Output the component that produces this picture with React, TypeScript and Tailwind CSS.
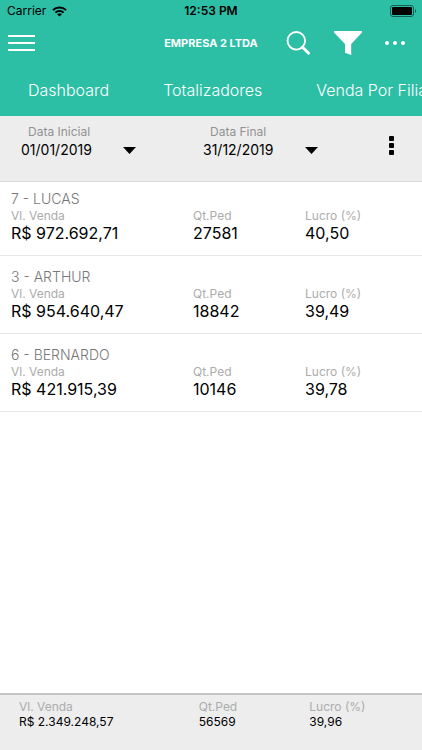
import React from "react";

const tabs = ["Dashboard", "Totalizadores", "Venda Por Filial"];

const vendedores = [
  { nome: "7 - LUCAS", venda: "R$ 972.692,71", pedidos: "27581", lucro: "40,50" },
  { nome: "3 - ARTHUR", venda: "R$ 954.640,47", pedidos: "18842", lucro: "39,49" },
  { nome: "6 - BERNARDO", venda: "R$ 421.915,39", pedidos: "10146", lucro: "39,78" },
];

function StatusBar() {
  return (
    <div className="grid h-[22px] grid-cols-3 items-center text-black">
      <div className="flex items-center gap-[6px] pl-[7px] text-xs">
        Carrier
        <svg width="15" height="11" viewBox="0 0 15 11" fill="none" stroke="currentColor">
          <path d="M0.9 4.1C4.6 0.5 10.4 0.5 14.1 4.1" strokeWidth="2" />
          <path d="M3.4 6.6C5.8 4.4 9.2 4.4 11.6 6.6" strokeWidth="1.9" />
          <path d="M7.5 10.6L5.1 8.2C6.5 7 8.5 7 9.9 8.2Z" fill="currentColor" stroke="none" />
        </svg>
      </div>
      <p className="text-center text-xs font-semibold">12:53 PM</p>
      <div className="flex justify-end pr-[5px]">
        <svg width="27" height="12" viewBox="0 0 27 12">
          <rect x="0.5" y="0.5" width="23" height="11" rx="2.5" fill="none" stroke="#125f53" />
          <rect x="2" y="2" width="20" height="8" rx="1" fill="black" />
          <path d="M25 4C26.5 4.5 26.5 7.5 25 8Z" fill="#125f53" />
        </svg>
      </div>
    </div>
  );
}

function Toolbar() {
  return (
    <div className="grid h-[42px] grid-cols-3 items-center">
      <div className="flex pl-2">
        <button aria-label="Menu">
          <svg width="27" height="16" viewBox="0 0 27 16" fill="currentColor">
            <path d="M0 0h27v2H0zM0 7h27v2H0zM0 14h27v2H0z" />
          </svg>
        </button>
      </div>
      <h1 className="text-center text-[11px] font-bold whitespace-nowrap">EMPRESA 2 LTDA</h1>
      <div className="flex items-center justify-between pr-[17px] pl-[5px]">
        <button aria-label="Pesquisar">
          <svg width="24" height="24" viewBox="0 0 24 24" fill="none" stroke="currentColor">
            <circle cx="10.3" cy="9.8" r="8.8" strokeWidth="1.9" />
            <path d="M16.6 16.2L22.6 22.2" strokeWidth="2.8" strokeLinecap="round" />
          </svg>
        </button>
        <button aria-label="Filtrar">
          <svg width="28" height="24" viewBox="0 0 28 24" fill="currentColor">
            <path d="M0 0H28V1.6L17.2 13V24L11 21.8V13L0 1.6Z" />
          </svg>
        </button>
        <button aria-label="Mais opções">
          <svg width="20" height="4" viewBox="0 0 20 4" fill="currentColor">
            <circle cx="2" cy="2" r="2" />
            <circle cx="10" cy="2" r="2" />
            <circle cx="18" cy="2" r="2" />
          </svg>
        </button>
      </div>
    </div>
  );
}

function DateField({ id, label, value }: { id: string; label: string; value: string }) {
  return (
    <div className="w-[115px]">
      <label htmlFor={id} className="block pl-[7px] text-xs leading-4 text-[#929292]">
        {label}
      </label>
      <div className="relative">
        <select id={id} className="block h-5 w-full appearance-none bg-transparent text-sm text-black">
          <option>{value}</option>
        </select>
        <svg className="pointer-events-none absolute top-[7px] right-0" width="13" height="7" viewBox="0 0 13 7">
          <path d="M0 0H13L6.5 7Z" />
        </svg>
      </div>
    </div>
  );
}

function Campo({ label, children, small }: { label: string; children: string; small?: boolean }) {
  return (
    <div>
      <dt className="text-xs leading-4 text-[#acacac]">{label}</dt>
      <dd className={small ? "text-xs leading-[14px] text-black" : "text-base leading-[18px] text-black"}>
        {children}
      </dd>
    </div>
  );
}

export default function App() {
  return (
    <div className="flex min-h-screen flex-col bg-white font-['Inter',sans-serif]">
      <header className="bg-[#2dbea6] text-white">
        <StatusBar />
        <Toolbar />
        <nav className="flex h-[52px] items-center gap-[54px] overflow-hidden pl-7">
          {tabs.map((tab) => (
            <a key={tab} href="#" className="text-base font-light whitespace-nowrap">
              {tab}
            </a>
          ))}
        </nav>
      </header>

      <section className="flex h-[66px] items-start border-b border-[#dcdcdc] bg-[#ededed] pt-2 pr-7 pl-[21px]">
        <DateField id="inicial" label="Data Inicial" value="01/01/2019" />
        <div className="w-[67px]" />
        <DateField id="final" label="Data Final" value="31/12/2019" />
        <button aria-label="Opções" className="mt-3 ml-auto">
          <svg width="5" height="19" viewBox="0 0 5 19">
            <rect width="5" height="5" rx="1" />
            <rect y="7" width="5" height="5" rx="1" />
            <rect y="14" width="5" height="5" rx="1" />
          </svg>
        </button>
      </section>

      <main className="grow">
        <ul>
          {vendedores.map((v) => (
            <li key={v.nome} className="border-b border-[#e6e6e6] px-[11px] pt-3 pb-[13px] first:pt-2">
              <h2 className="text-sm leading-[18px] font-light text-[#777777]">{v.nome}</h2>
              <dl className="grid grid-cols-[455fr_280fr_265fr]">
                <Campo label="Vl. Venda">{v.venda}</Campo>
                <Campo label="Qt.Ped">{v.pedidos}</Campo>
                <Campo label="Lucro (%)">{v.lucro}</Campo>
              </dl>
            </li>
          ))}
        </ul>
      </main>

      <footer className="h-[57px] border-t-2 border-[#c4c4c4] bg-[#ededed] pt-1 pr-2 pl-[19px]">
        <dl className="grid grid-cols-[455fr_280fr_265fr]">
          <Campo label="Vl. Venda" small>R$ 2.349.248,57</Campo>
          <Campo label="Qt.Ped" small>56569</Campo>
          <Campo label="Lucro (%)" small>39,96</Campo>
        </dl>
      </footer>
    </div>
  );
}
